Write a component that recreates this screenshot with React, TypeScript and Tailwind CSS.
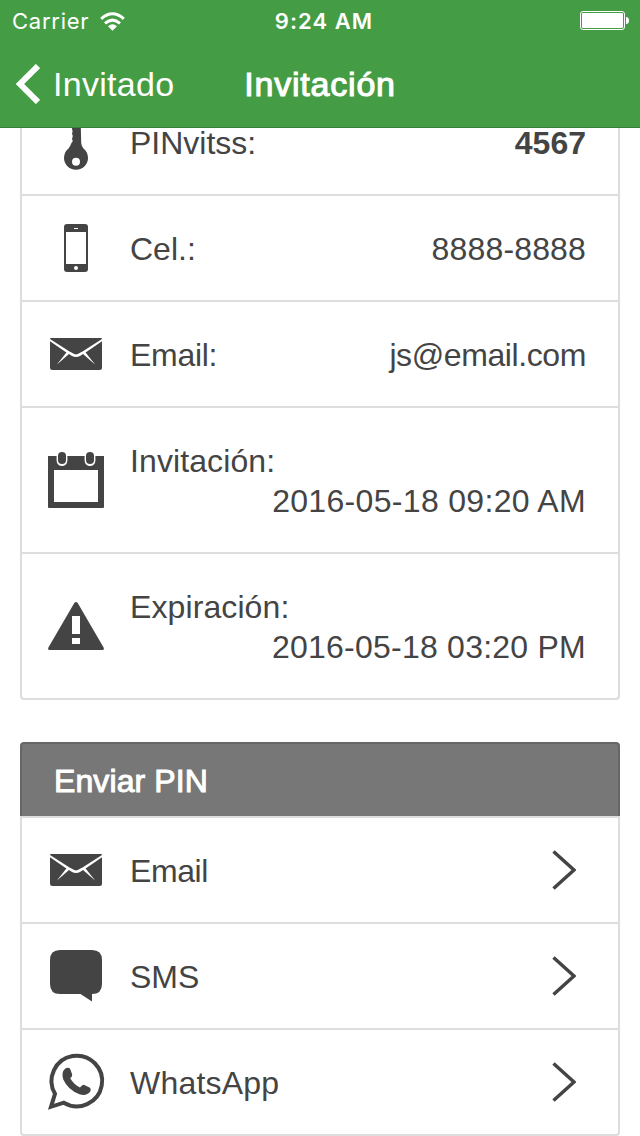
import type { ReactNode } from "react";

const Icon = ({ children }: { children: ReactNode }) => (
  <svg viewBox="0 0 56 56" className="h-14 w-14 shrink-0 overflow-visible" fill="#444">
    {children}
  </svg>
);

const KeyIcon = () => (
  <Icon>
    <path
      fillRule="evenodd"
      d="M24 0H32.5L33.200 29Q33.500 32.500 35.500 34.400A12 12 0 1 1 20.500 34.400Q22.500 32 23.200 29.500L24.800 27L24 25L24.800 22L24 19.500L24.600 17.500L24 14.500ZM28 43.700a4 4 0 1 0 0 8a4 4 0 0 0 0-8Z"
    />
  </Icon>
);

const PhoneIcon = () => (
  <Icon>
    <rect x="16" y="4" width="24" height="48" rx="3" />
    <rect x="18" y="12" width="20" height="32" fill="#fff" />
    <rect x="26" y="8" width="4" height="1" fill="#fff" />
    <circle cx="28" cy="48" r="2" fill="#fff" />
  </Icon>
);

const MailIcon = () => (
  <Icon>
    <path d="M3 12H53Q54 12 54 13V41.5Q54 44 51.5 44H4.5Q2 44 2 41.5V13Q2 12 3 12Z" />
    <path
      d="M2 13L21.500 25.400Q23 26 24.800 27.300Q28 29.500 31.200 27.300Q33 26 34.500 25.400L54 13V15.200L37.600 26.500L47.300 38.700L35 28.100L32 29.900Q28 32.200 24 29.900L21 28.100L8.700 38.700L18.400 26.500L2 15.200Z"
      fill="#fff"
    />
  </Icon>
);

const CalendarIcon = () => (
  <Icon>
    <path fillRule="evenodd" d="M0 4H56V55Q56 56 55 56H1Q0 56 0 55ZM6 18V50H50V18Z" />
    <rect x="8.600" y="-1" width="10.800" height="15" rx="5.400" fill="#fff" />
    <rect x="36.600" y="-1" width="10.800" height="15" rx="5.400" fill="#fff" />
    <rect x="10" y="0" width="8" height="12" rx="4" />
    <rect x="38" y="0" width="8" height="12" rx="4" />
  </Icon>
);

const WarningIcon = () => (
  <Icon>
    <path
      fillRule="evenodd"
      d="M26.300 5Q28 3 29.700 5L55.600 49.500Q56.500 52 54.500 52H1.500Q-.5 52 .4 49.500ZM24 18V36H32V18ZM24 40V46H32V40Z"
    />
  </Icon>
);

const ChatIcon = () => (
  <Icon>
    <path d="M12 2H44Q54 2 54 12V36Q54 46 44 46V53.500L32.500 46H12Q2 46 2 36V12Q2 2 12 2Z" />
  </Icon>
);

const WhatsAppIcon = () => (
  <Icon>
    <path
      d="M7 39.800A25.300 25.300 0 1 1 15.800 48.700L3 52.800Z"
      fill="none"
      stroke="#444"
      strokeWidth="4"
    />
    <path d="M17 14.800Q19.500 13 22 14.500L24.200 20.500Q24.500 22.500 22.200 24.300Q26 30.800 32 33.500Q34 30.800 35.800 30.800L42 33.800Q43.300 35 42.300 37.500Q38.500 42.500 31.500 40.300Q20 36 15.300 25.500Q13 18.500 17 14.800Z" />
  </Icon>
);

const Chevron = () => (
  <svg viewBox="0 0 24 40" className="h-10 w-6 shrink-0" fill="none" stroke="#444" strokeWidth="3.500">
    <path d="M1.500 1.500L22 20L1.500 38.500" />
  </svg>
);

const StatusBar = () => (
  <div className="grid h-10 grid-cols-3 items-center font-['Inter',sans-serif] text-[22px] leading-none">
    <div className="flex items-center pt-0.5 pl-3">
      <span className="w-[88px] tracking-[0.75px]">Carrier</span>
      <svg viewBox="0 0 25 19" className="h-[19px] w-[25px]" fill="none" stroke="#fff" strokeWidth="3">
        <path d="M1.200 6.800Q12.500 -3.200 23.800 6.800M5 11.300Q12.500 5 20 11.300" />
        <path d="M8 14.200Q12.500 10.500 17 14.200L12.500 18.800Z" fill="#fff" stroke="none" />
      </svg>
    </div>
    <div className="pt-0.5 pl-2 text-center font-semibold tracking-[1.05px]">9:24 AM</div>
    <div className="flex justify-end pr-[11px]">
      <svg viewBox="0 0 49 20" className="h-5 w-[49px]">
        <rect x=".5" y="1.500" width="44" height="18" rx="2.500" fill="none" stroke="#fff" />
        <rect x="2" y="3" width="41" height="15" rx="1" fill="#fff" />
        <path d="M46 7Q49 7 49 10.500T46 14Z" fill="#fff" />
      </svg>
    </div>
  </div>
);

type RowProps = {
  icon: ReactNode;
  label: string;
  labelClass?: string;
  value?: string;
  valueClass?: string;
  arrow?: boolean;
};

const Row = ({ icon, label, labelClass = "", value, valueClass = "", arrow }: RowProps) => (
  <div className="flex h-[106px] items-center border-b-2 border-[#ddd] pr-8 pl-[26px] last:h-[104px] last:border-b-0">
    {icon}
    <span className={`ml-[26px] grow pt-0.5 ${labelClass}`}>{label}</span>
    {value && <span className={`pt-0.5 ${valueClass}`}>{value}</span>}
    {arrow && (
      <div className="mr-2.5 flex">
        <Chevron />
      </div>
    )}
  </div>
);

const DateRow = ({ icon, label, labelClass = "", value, valueClass = "" }: RowProps) => (
  <div className="flex h-[146px] items-center border-b-2 border-[#ddd] pr-8 pl-[26px] last:h-36 last:border-b-0">
    {icon}
    <div className="ml-[26px] flex grow flex-col pt-0.5">
      <span className={labelClass}>{label}</span>
      <span className={`text-right ${valueClass}`}>{value}</span>
    </div>
  </div>
);

export default function App() {
  return (
    <div className="flex h-[1136px] w-[640px] flex-col overflow-hidden bg-white font-['Liberation_Sans',Arial,sans-serif] text-[32px] leading-10 text-[#444]">
      <header className="h-32 shrink-0 border-b border-[#388038] bg-[#449d44] text-white">
        <StatusBar />
        <nav className="grid h-[88px] grid-cols-[1fr_auto_1fr] items-center text-[34px]">
          <div className="flex items-center gap-[13px] pl-4">
            <svg viewBox="0 0 24 40" className="h-10 w-6" fill="none" stroke="#fff" strokeWidth="6">
              <path d="M22 2L4 20L22 38" />
            </svg>
            <span className="tracking-[0.3px]">Invitado</span>
          </div>
          <h1 className="tracking-[0.8px] [-webkit-text-stroke:1.1px_white]">Invitación</h1>
        </nav>
      </header>
      <main className="flex flex-1 flex-col gap-[42px] overflow-hidden px-5">
        <section className="-mt-[38px] shrink-0 rounded-b-[4px] border-x-2 border-b-2 border-[#ddd]">
          <Row icon={<KeyIcon />} label="PINvitss:" value="4567" valueClass="font-bold" />
          <Row icon={<PhoneIcon />} label="Cel.:" value="8888-8888" valueClass="tracking-[0.15px]" />
          <Row
            icon={<MailIcon />}
            label="Email:"
            labelClass="tracking-[-0.3px]"
            value="js@email.com"
            valueClass="tracking-[-0.4px]"
          />
          <DateRow
            icon={<CalendarIcon />}
            label="Invitación:"
            labelClass="tracking-[0.1px]"
            value="2016-05-18 09:20 AM"
            valueClass="tracking-[0.32px]"
          />
          <DateRow
            icon={<WarningIcon />}
            label="Expiración:"
            labelClass="tracking-[0.1px]"
            value="2016-05-18 03:20 PM"
            valueClass="tracking-[0.24px]"
          />
        </section>
        <section className="shrink-0">
          <h2 className="flex h-[74px] items-center rounded-t-[4px] border-x-2 border-t-2 border-[#666] bg-[#777] px-8 pt-0.5 tracking-[0.1px] text-white [-webkit-text-stroke:1px_white]">
            Enviar PIN
          </h2>
          <div className="h-80 rounded-b-[4px] border-2 border-[#ddd]">
            <Row icon={<MailIcon />} label="Email" labelClass="tracking-[-0.4px]" arrow />
            <Row icon={<ChatIcon />} label="SMS" arrow />
            <Row icon={<WhatsAppIcon />} label="WhatsApp" labelClass="tracking-[0.2px]" arrow />
          </div>
        </section>
      </main>
    </div>
  );
}
